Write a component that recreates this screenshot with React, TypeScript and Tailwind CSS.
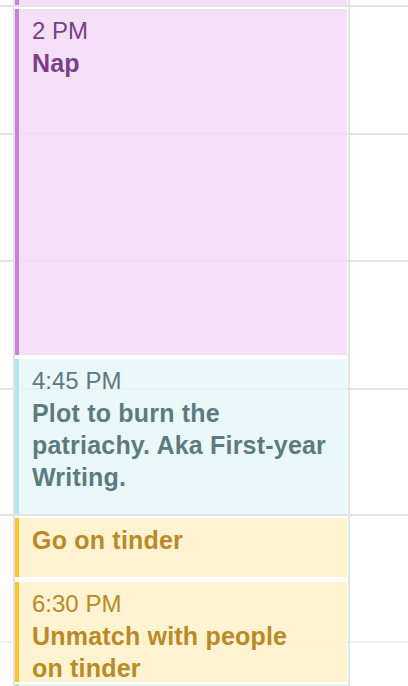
type CalEvent = {
  top: number;
  height: number;
  time?: string;
  title?: React.ReactNode;
  bg: string;
  border: string;
  text: string;
};

const events: CalEvent[] = [
  { top: -40, height: 45, bg: "bg-[#f2dbf6d9]", border: "border-[#c97fdc]", text: "text-[#7c3d89]" },
  { top: 9, height: 346, time: "2 PM", title: "Nap", bg: "bg-[#f2dbf6d9]", border: "border-[#c97fdc]", text: "text-[#7c3d89]" },
  {
    top: 359,
    height: 155,
    time: "4:45 PM",
    title: (
      <>
        Plot to burn the
        <br />
        patriachy. Aka First-year
        <br />
        Writing.
      </>
    ),
    bg: "bg-[#e6f7f9d9]",
    border: "border-[#b1e6ed]",
    text: "text-[#5c7b81]",
  },
  { top: 518, height: 59, title: "Go on tinder", bg: "bg-[#fff1c9d9]", border: "border-[#fcc52c]", text: "text-[#b98a27]" },
  {
    top: 582,
    height: 100,
    time: "6:30 PM",
    title: (
      <>
        Unmatch with people
        <br />
        on tinder
      </>
    ),
    bg: "bg-[#fff1c9d9]",
    border: "border-[#fcc52c]",
    text: "text-[#b98a27]",
  },
  { top: 684, height: 40, bg: "bg-[#e6f6e9d9]", border: "border-[#bfe9cf]", text: "text-[#4f7a5c]" },
];

const rows = [128, 127, 128, 126, 127];

function EventBlock({ ev }: { ev: CalEvent }) {
  return (
    <div
      className={`absolute left-0 right-[1px] overflow-hidden border-l-4 pl-[13px] pr-2 pt-[6px] ${ev.bg} ${ev.border} ${ev.text}`}
      style={{ top: ev.top, height: ev.height }}
    >
      {ev.time && <div className="text-[24px] leading-[32px] whitespace-nowrap">{ev.time}</div>}
      {ev.title && (
        <div className="text-[25px] leading-[32px] font-bold tracking-[0.2px] whitespace-nowrap">{ev.title}</div>
      )}
    </div>
  );
}

export default function App() {
  return (
    <div
      className="relative w-[408px] h-[686px] overflow-hidden bg-white"
      style={{ fontFamily: '"Liberation Sans", Arial, sans-serif' }}
    >
      {/* hour lines */}
      <div className="flex flex-col">
        <div className="h-[5px]" />
        {rows.map((h, i) => (
          <div key={i} className="border-t-2 border-[#e3e3e3]" style={{ height: h }} />
        ))}
        <div className="h-[45px] border-t-2 border-[#f0f0f0]" />
      </div>

      {/* columns */}
      <div className="absolute inset-0 flex">
        <div className="w-[13px]" />
        <div className="relative w-[337px] border-x-2 border-[#e3e3e3]">
          {events.map((ev, i) => (
            <EventBlock key={i} ev={ev} />
          ))}
        </div>
        <div className="flex-1" />
      </div>
    </div>
  );
}
